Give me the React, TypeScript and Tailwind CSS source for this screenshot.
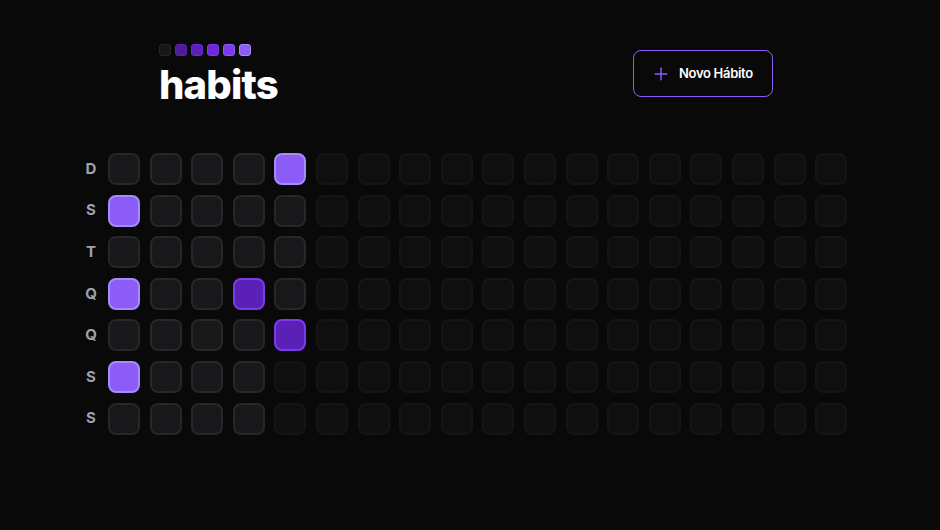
import React from "react";
import { Plus } from "lucide-react";

const weekDays = ["D", "S", "T", "Q", "Q", "S", "S"];

// estados dos dias já passados, coluna por coluna (semana a semana)
// 0 = vazio, 1 = roxo forte, 2 = roxo claro
const summary: number[] = [
  0, 2, 0, 2, 0, 2, 0,
  0, 0, 0, 0, 0, 0, 0,
  0, 0, 0, 0, 0, 0, 0,
  0, 0, 0, 1, 0, 0, 0,
  2, 0, 0, 0, 1,
];

const totalColumns = 18;

const Logo = () => {
  const colors = [
    "bg-[#18181b] border-[#27272a]",
    "bg-[#4c1d95] border-[#5b21b6]",
    "bg-[#5b21b6] border-[#6d28d9]",
    "bg-[#6d28d9] border-[#7c3aed]",
    "bg-[#7c3aed] border-[#8b5cf6]",
    "bg-[#8b5cf6] border-[#a78bfa]",
  ];
  return (
    <div className="flex gap-1">
      {colors.map((c, i) => (
        <div key={i} className={`w-3 h-3 rounded-[3px] border ${c}`} />
      ))}
    </div>
  );
};

const Square = ({ state, future }: { state: number; future?: boolean }) => {
  let cls = "bg-[#18181b] border-[#27272a]";
  if (state === 1) cls = "bg-[#5b21b6] border-[#7c3aed]";
  if (state === 2) cls = "bg-[#8b5cf6] border-[#a78bfa]";
  return (
    <div
      className={`w-8 h-8 rounded-lg border-2 ${cls} ${future ? "opacity-40" : ""}`}
    />
  );
};

export default function App() {
  const cells = Array.from({ length: totalColumns * 7 }, (_, i) => i);

  return (
    <div
      className="w-full h-screen bg-[#09090a] text-white"
      style={{ fontFamily: "Inter, 'Noto Sans', sans-serif" }}
    >
      {/* cabeçalho */}
      <div className="flex items-start justify-between w-[614px] ml-[159px] pt-[44px]">
        <div className="flex flex-col">
          <Logo />
          <h1 className="mt-[9px] text-[40px] leading-none font-extrabold tracking-[-0.8px]">
            habits
          </h1>
        </div>
        <button className="mt-[6px] h-[47px] w-[140px] flex items-center gap-2 pl-[17px] pt-[1px] border border-[#8b5cf6] rounded-lg text-[13px] font-semibold tracking-[-0.3px]">
          <Plus size={20} className="text-[#8b5cf6]" strokeWidth={1.75} />
          Novo Hábito
        </button>
      </div>

      {/* tabela de hábitos */}
      <div className="flex ml-[81px] mt-[48px] gap-[7px]">
        <div className="flex flex-col gap-[9.6px]">
          {weekDays.map((d, i) => (
            <div
              key={i}
              className="w-5 h-8 flex items-center justify-center text-[15px] font-bold text-[#a1a1aa]"
            >
              {d}
            </div>
          ))}
        </div>
        <div className="grid grid-rows-7 grid-flow-col gap-[9.6px]">
          {cells.map((i) =>
            i < summary.length ? (
              <Square key={i} state={summary[i]} />
            ) : (
              <Square key={i} state={0} future />
            )
          )}
        </div>
      </div>
    </div>
  );
}
